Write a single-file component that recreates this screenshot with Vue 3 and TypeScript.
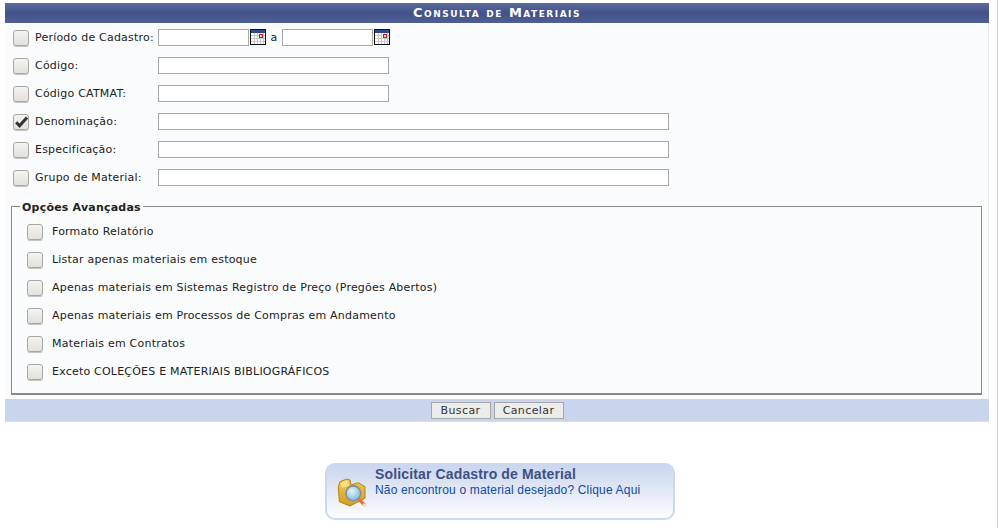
<script setup lang="ts">
interface Field { label: string; checked: boolean; wide: boolean }
const fields: Field[] = [
  { label: 'Código:', checked: false, wide: false },
  { label: 'Código CATMAT:', checked: false, wide: false },
  { label: 'Denominação:', checked: true, wide: true },
  { label: 'Especificação:', checked: false, wide: true },
  { label: 'Grupo de Material:', checked: false, wide: true },
]
const options: string[] = [
  'Formato Relatório',
  'Listar apenas materiais em estoque',
  'Apenas materiais em Sistemas Registro de Preço (Pregões Abertos)',
  'Apenas materiais em Processos de Compras em Andamento',
  'Materiais em Contratos',
  'Exceto COLEÇÕES E MATERIAIS BIBLIOGRÁFICOS',
]
const gridX: number[] = [4, 7, 10, 13]
const gridY: number[] = [6, 9, 12]
</script>

<template>
  <div class="page">
    <div class="panel">
      <div class="caption">Consulta de Materiais</div>
      <div class="body">
        <div class="row">
          <span class="check"></span>
          <span class="label">Período de Cadastro:</span>
          <span class="box date"></span>
          <svg class="cal" width="16" height="16" viewBox="0 0 16 16">
            <rect x="0.5" y="0.5" width="15" height="15" fill="#fff" stroke="#111" />
            <rect x="1" y="1" width="14" height="3" fill="#2b4a92" />
            <path v-for="x in gridX" :key="'x' + x" :d="`M${x + 0.5} 4V15`" stroke="#c8c8c8" />
            <path v-for="y in gridY" :key="'y' + y" :d="`M1 ${y + 0.5}H15`" stroke="#c8c8c8" />
            <rect x="9.5" y="5.5" width="3" height="3" fill="#fff" stroke="#e01010" />
          </svg>
          <span class="sep">a</span>
          <span class="box date"></span>
          <svg class="cal" width="16" height="16" viewBox="0 0 16 16">
            <rect x="0.5" y="0.5" width="15" height="15" fill="#fff" stroke="#111" />
            <rect x="1" y="1" width="14" height="3" fill="#2b4a92" />
            <path v-for="x in gridX" :key="'x' + x" :d="`M${x + 0.5} 4V15`" stroke="#c8c8c8" />
            <path v-for="y in gridY" :key="'y' + y" :d="`M1 ${y + 0.5}H15`" stroke="#c8c8c8" />
            <rect x="9.5" y="5.5" width="3" height="3" fill="#fff" stroke="#e01010" />
          </svg>
        </div>
        <div v-for="f in fields" :key="f.label" class="row">
          <span class="check">
            <svg v-if="f.checked" width="16" height="16" viewBox="0 0 16 16">
              <path d="M3.2 8.2 L6.6 11.8 L14 3.6" fill="none" stroke="#333" stroke-width="3" />
            </svg>
          </span>
          <span class="label">{{ f.label }}</span>
          <span class="box" :class="f.wide ? 'wide' : 'narrow'"></span>
        </div>

        <fieldset class="adv">
          <legend>Opções Avançadas</legend>
          <div v-for="o in options" :key="o" class="opt">
            <span class="check"></span>
            <span class="opt-label">{{ o }}</span>
          </div>
        </fieldset>
      </div>
      <div class="foot">
        <button class="btn btn-a" type="button">Buscar</button>
        <button class="btn btn-b" type="button">Cancelar</button>
      </div>
    </div>

    <div class="notice">
      <svg class="folder" width="32" height="32" viewBox="0 0 32 32">
        <defs>
          <linearGradient id="fg" x1="0" y1="0" x2="0" y2="1">
            <stop offset="0" stop-color="#f6c94e" />
            <stop offset="1" stop-color="#d49b22" />
          </linearGradient>
          <radialGradient id="lens" cx="0.4" cy="0.35" r="0.7">
            <stop offset="0" stop-color="#e4f4fa" />
            <stop offset="1" stop-color="#7fb6d6" />
          </radialGradient>
        </defs>
        <path d="M1.3 9.7 L3 4.7 L9.7 2 L13 3 L14 8 L21.3 5.7 L28 9.7 L28 21.3 L13 29 L2.3 24.7 Z" fill="url(#fg)" stroke="#b0821f" stroke-width="1" stroke-linejoin="round" />
        <path d="M3.5 6 L10 3.5 L12 8.5 L5 11 Z" fill="#fbe08a" />
        <path d="M21.5 22 L27 27.4" stroke="#e8743a" stroke-width="3.4" stroke-linecap="round" />
        <path d="M27 27.6 L28.6 29" stroke="#e9e4da" stroke-width="2.4" stroke-linecap="round" />
        <circle cx="16.3" cy="16.3" r="7.4" fill="url(#lens)" stroke="#7d8f9e" stroke-width="1.6" />
      </svg>
      <div class="notice-text">
        <div class="notice-title">Solicitar Cadastro de Material</div>
        <div class="notice-link">Não encontrou o material desejado? Clique Aqui</div>
      </div>
    </div>
  </div>
</template>

<style>
html, body { background: #fff; }
</style>

<style scoped>
.page {
  width: 998px;
  height: 528px;
  box-sizing: border-box;
  padding: 3px 8px 0 5px;
  border-right: 1px solid #d4d4d4;
  font-family: "DejaVu Sans", sans-serif;
  font-size: 11px;
  letter-spacing: 0.21px;
  color: #222;
  overflow: hidden;
}
.panel {
  border-bottom: 1px solid #dcdcdc;
}
.caption {
  height: 20px;
  line-height: 20px;
  text-align: center;
  font-weight: bold;
  font-variant: small-caps;
  letter-spacing: 1.5px;
  font-size: 13px;
  color: #fff;
  background: linear-gradient(#5a6a9c, #43518a 50%, #4f5e93);
}
.body {
  background: #f9fbfd;
  border-right: 1px solid #e6eaf2;
  padding: 0 6px 4px 0;
}
.row {
  display: flex;
  align-items: center;
  height: 28px;
  padding-left: 8px;
}
.check {
  flex: none;
  display: block;
  box-sizing: border-box;
  width: 16px;
  height: 16px;
  margin-top: 1px;
  border: 1px solid #a9a9a4;
  border-radius: 3px;
  background: linear-gradient(#f4f3f1, #e2e1dd);
  box-shadow: 0 1px 0 #c4c4c0;
}
.check svg { display: block; margin: -1px; }
.label {
  flex: none;
  width: 123px;
  margin-left: 6px;
  white-space: nowrap;
}
.box {
  flex: none;
  display: block;
  box-sizing: border-box;
  height: 17px;
  background: #fff;
  border: 1px solid #a8a8a8;
}
.date { width: 91px; }
.narrow { width: 231px; }
.wide { width: 511px; }
.cal { flex: none; margin-left: 1px; display: block; }
.sep { width: 16px; text-align: center; }
.adv {
  margin: 8px 0 0 6px;
  padding: 3px 0 0 15px;
  border: 1px solid #888;
  border-width: 1px 1px 2px 1px;
  min-width: 0;
  height: 196px;
  box-sizing: border-box;
}
.adv legend {
  font-weight: bold;
  padding: 2px 2px 0;
  margin-left: -7px;
  color: #222;
  line-height: 13px;
}
.opt {
  display: flex;
  align-items: center;
  height: 28px;
}
.opt-label {
  margin-left: 9px;
  white-space: nowrap;
}
.foot {
  display: flex;
  justify-content: center;
  align-items: center;
  gap: 3px;
  height: 22px;
  background: #c8d5ec;
}
.btn {
  box-sizing: border-box;
  height: 17px;
  padding: 0;
  font: 11px "DejaVu Sans", sans-serif;
  color: #333;
  letter-spacing: 0.4px;
  background: #ececea;
  border: 1px solid #a6a6a6;
  border-radius: 0;
}
.btn-a { width: 60px; }
.btn-b { width: 70px; }
.notice {
  box-sizing: border-box;
  display: flex;
  width: 350px;
  height: 57px;
  margin: 41px 0 0 320px;
  border: 2px solid #cbd8ef;
  border-radius: 10px;
  background: linear-gradient(#c9d6ee, #fdfdfe);
}
.folder { flex: none; margin: 12px 0 0 10px; }
.notice-text {
  margin-left: 6px;
  font-family: "Liberation Sans", Arial, sans-serif;
}
.notice-title {
  font-size: 14px;
  font-weight: bold;
  letter-spacing: 0.14px;
  color: #414f85;
  line-height: 17px;
  margin-top: 1px;
}
.notice-link {
  font-size: 12px;
  letter-spacing: 0.17px;
  color: #0f4aa8;
  line-height: 14px;
}
</style>
